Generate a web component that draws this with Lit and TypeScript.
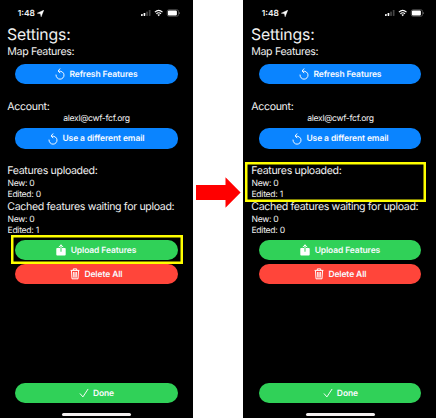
import { LitElement, html, svg, css } from "lit";
import { customElement, property } from "lit/decorators.js";

const icons = {
  refresh: svg`<path d="M4.4 3.2 A4 4 0 1 1 1 7" fill="none" stroke="#fff" stroke-width=".95" stroke-linecap="round"/><path d="M4.9 .8 L3.1 3 L5 4.9" fill="none" stroke="#fff" stroke-width=".95" stroke-linecap="round" stroke-linejoin="round"/>`,
  upload: svg`<path d="M1.2 4 H4 V7.4 H6 V4 H8.8 Q9.7 4 9.7 4.8 V10.5 Q9.7 11.4 8.8 11.4 H1.2 Q.3 11.4 .3 10.5 V4.8 Q.3 4 1.2 4Z" fill="#fff"/><path d="M5 7.2 V1 M3 2.9 L5 .9 L7 2.9" fill="none" stroke="#fff" stroke-width="1" stroke-linecap="round" stroke-linejoin="round"/>`,
  trash: svg`<path d="M.6 2.4 H9.4 M3.3 2.2 V.9 H6.7 V2.2" fill="none" stroke="#fff" stroke-width="1"/><path d="M1.5 3 L2 10.8 H8 L8.5 3 M3.6 4 L3.8 9.6 M5 4 V9.6 M6.4 4 L6.2 9.6" fill="none" stroke="#fff" stroke-width="1" stroke-linejoin="round"/>`,
  check: svg`<path d="M1.2 6.8 L3.9 9.9 L8.9 2.3" fill="none" stroke="#fff" stroke-width=".95" stroke-linecap="round" stroke-linejoin="round"/>`,
};

@customElement("pill-button")
class PillButton extends LitElement {
  @property() icon: keyof typeof icons = "refresh";
  @property() label = "";
  @property({ reflect: true }) tone = "blue";

  static styles = css`
    :host { display: block; height: 20.2px; margin: 0 15.5px 0 15.2px; flex: none; }
    .pill {
      box-sizing: border-box; width: 100%; height: 100%; border: 0; border-radius: 10.1px; padding: 0;
      display: flex; align-items: center; justify-content: center; gap: 4.2px;
      color: #f8fbff; background: #0a84ff;
      font: 600 8.5px/20px Inter, "Liberation Sans", sans-serif; letter-spacing: -.11px; white-space: nowrap;
      text-rendering: geometricPrecision;
    }
    :host([tone="green"]) .pill { background: #30d158; }
    :host([tone="red"]) .pill { background: #ff453a; }
    svg { width: 10px; height: 12px; flex: none; }
    .label { padding-top: 1.6px; }
  `;

  render() {
    return html`<button class="pill"><svg viewBox="0 0 10 12">${icons[this.icon]}</svg><span class="label">${this.label}</span></button>`;
  }
}

@customElement("phone-screen")
class PhoneScreen extends LitElement {
  @property({ type: Number }) uploaded = 0;
  @property({ type: Number }) cached = 0;
  @property() highlight = "";

  static styles = css`
    :host { display: block; height: 418px; background: #000; color: #f0f0f0; }
    .screen {
      position: relative; width: 193px; height: 418px; display: flex; flex-direction: column;
      font-family: Inter, "Liberation Sans", sans-serif; white-space: nowrap;
      text-rendering: geometricPrecision;
    }
    .status { height: 26px; flex: none; display: flex; align-items: center; padding: 0 13px 0 17.8px; box-sizing: border-box; }
    .time { font-size: 8.4px; font-weight: 600; padding-top: 1px; }
    .loc { width: 7px; height: 7px; margin-left: 2.5px; }
    .signs { width: 40px; height: 8px; margin-left: auto; }
    .title { height: 18px; line-height: 17px; font-size: 15.8px; letter-spacing: -.16px; padding-left: 7px; flex: none; }
    .head { height: 14px; line-height: 15.4px; font-size: 10.6px; letter-spacing: -.34px; padding-left: 7.3px; flex: none; }
    .row { height: 11.2px; line-height: 13.2px; font-size: 8.6px; letter-spacing: -.28px; padding-left: 7.5px; flex: none; }
    .email { height: 12px; line-height: 13px; font-size: 8.6px; letter-spacing: -.33px; text-align: center; flex: none; }
    .map { height: 20px; line-height: 15px; }
    .account { margin-top: 15px; }
    .change { margin-top: 3.3px; }
    .uploaded { margin-top: 14.5px; height: 14.7px; }
    .waiting { height: 13.3px; line-height: 14px; }
    .upload { margin-top: 4.3px; }
    .delete { margin-top: 3.8px; }
    .done { margin-top: auto; }
    .home { width: 69px; height: 2.7px; border-radius: 2px; background: #f4f0f0; margin: 10px auto 2.2px 62px; flex: none; }
    .mark { position: absolute; box-sizing: border-box; box-shadow: inset 0 0 0 2.5px #ff0; }
    .mark.button { left: 11px; top: 235px; width: 172px; height: 29px; }
    .mark.count { left: 1px; top: 162px; width: 181px; height: 40px; }
  `;

  render() {
    return html`<div class="screen">
      <div class="status">
        <span class="time">1:48</span>
        <svg class="loc" viewBox="0 0 7 7"><path d="M6.9 .1 L4.1 6.9 L3.4 3.8 L.1 3.2Z" fill="#fff" stroke="#fff" stroke-width=".3"/></svg>
        <svg class="signs" viewBox="0 0 40 8">
          <rect x="1" y="5" width="1.7" height="2" rx=".4" fill="#fff"/>
          <rect x="3.6" y="4" width="1.7" height="3" rx=".4" fill="#fff"/>
          <rect x="6.2" y="2.6" width="1.7" height="4.4" rx=".4" fill="#444"/>
          <rect x="8.8" y="1" width="1.7" height="6" rx=".4" fill="#444"/>
          <path d="M14.9 3.1 Q18.7 -.3 22.5 3.1 M16.4 4.7 Q18.7 2.8 21 4.7" fill="none" stroke="#fff" stroke-width="1.2"/>
          <path d="M17.4 5.8 Q18.7 4.9 20 5.8 L18.7 7.2Z" fill="#fff"/>
          <rect x="27.2" y=".7" width="11.4" height="6.6" rx="1.9" fill="none" stroke="#777" stroke-width=".6"/>
          <rect x="27.9" y="1.4" width="9" height="5.2" rx="1.1" fill="#fff"/>
          <rect x="39" y="3" width=".8" height="2" rx=".4" fill="#777"/>
        </svg>
      </div>
      <div class="title">Settings:</div>
      <div class="head map">Map Features:</div>
      <pill-button icon="refresh" label="Refresh Features"></pill-button>
      <div class="head account">Account:</div>
      <div class="email">alexl@cwf-fcf.org</div>
      <pill-button class="change" icon="refresh" label="Use a different email"></pill-button>
      <div class="head uploaded">Features uploaded:</div>
      <div class="row">New: 0</div>
      <div class="row">Edited: ${this.uploaded}</div>
      <div class="head waiting">Cached features waiting for upload:</div>
      <div class="row">New: 0</div>
      <div class="row">Edited: ${this.cached}</div>
      <pill-button class="upload" tone="green" icon="upload" label="Upload Features"></pill-button>
      <pill-button class="delete" tone="red" icon="trash" label="Delete All"></pill-button>
      <pill-button class="done" tone="green" icon="check" label="Done"></pill-button>
      <div class="home"></div>
      ${this.highlight ? html`<div class="mark ${this.highlight}"></div>` : null}
    </div>`;
  }
}

@customElement("app-root")
class AppRoot extends LitElement {
  static styles = css`
    :host { display: block; background: #fff; }
    .compare { display: grid; grid-template-columns: 193.3px 50px 1fr; height: 418px; overflow: hidden; }
    .after { padding-left: .7px; }
    .between { display: flex; align-items: center; }
    .arrow { width: 45px; height: 31px; margin: 0 0 34px 2.7px; }
  `;

  render() {
    return html`<div class="compare">
      <phone-screen .uploaded=${0} .cached=${1} highlight="button"></phone-screen>
      <div class="between"><svg class="arrow" viewBox="0 0 45 31"><path d="M0 8 H29.5 V.2 L44.6 15.5 L29.5 30.8 V23 H0Z" fill="#f00"/></svg></div>
      <phone-screen class="after" .uploaded=${1} .cached=${0} highlight="count"></phone-screen>
    </div>`;
  }
}
